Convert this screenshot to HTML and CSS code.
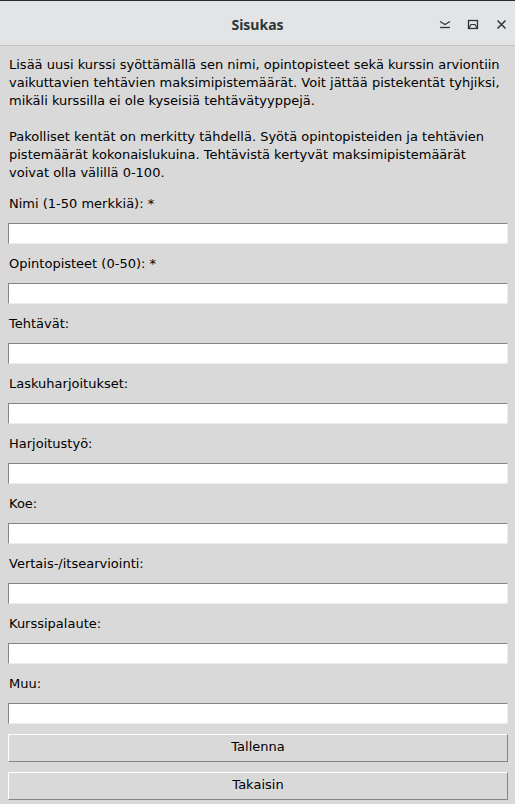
FILE: index.html
```html
<!DOCTYPE html>
<html lang="fi">
<head>
<meta charset="utf-8">
<title>Sisukas</title>
<link rel="stylesheet" href="styles.css">
</head>
<body>
<div class="window">
  <header class="titlebar">
    <div class="spacer"></div>
    <div class="title">Sisukas</div>
    <div class="controls">
      <span class="ctl">
        <svg width="12" height="10" viewBox="0 0 12 10"><path d="M1 1.5 L6 4.5 L11 1.5" fill="none" stroke="#2e3436" stroke-width="1.3"/><path d="M1 7.5 H11" stroke="#2e3436" stroke-width="1.3"/></svg>
      </span>
      <span class="ctl">
        <svg width="12" height="11" viewBox="0 0 12 11"><rect x="1.5" y="1.5" width="9" height="8" fill="none" stroke="#2e3436" stroke-width="1.3"/><path d="M2 9 L4 5.5 H8 L10 9" fill="none" stroke="#2e3436" stroke-width="1.2"/></svg>
      </span>
      <span class="ctl">
        <svg width="11" height="11" viewBox="0 0 11 11"><path d="M1.5 1.5 L9.5 9.5 M9.5 1.5 L1.5 9.5" stroke="#2e3436" stroke-width="1.5"/></svg>
      </span>
    </div>
  </header>
  <main class="content">
    <p class="intro">Lisää uusi kurssi syöttämällä sen nimi, opintopisteet sekä kurssin arviontiin vaikuttavien tehtävien maksimipistemäärät. Voit jättää pistekentät tyhjiksi, mikäli kurssilla ei ole kyseisiä tehtävätyyppejä.<br><br>Pakolliset kentät on merkitty tähdellä. Syötä opintopisteiden ja tehtävien pistemäärät kokonaislukuina. Tehtävistä kertyvät maksimipistemäärät voivat olla välillä 0-100.</p>
    <form class="fields">
      <label class="label first">Nimi (1-50 merkkiä): *</label>
      <input class="entry" type="text">
      <label class="label">Opintopisteet (0-50): *</label>
      <input class="entry" type="text">
      <label class="label">Tehtävät:</label>
      <input class="entry" type="text">
      <label class="label">Laskuharjoitukset:</label>
      <input class="entry" type="text">
      <label class="label">Harjoitustyö:</label>
      <input class="entry" type="text">
      <label class="label">Koe:</label>
      <input class="entry" type="text">
      <label class="label">Vertais-/itsearviointi:</label>
      <input class="entry" type="text">
      <label class="label">Kurssipalaute:</label>
      <input class="entry" type="text">
      <label class="label">Muu:</label>
      <input class="entry" type="text">
      <button class="btn" type="button">Tallenna</button>
      <button class="btn" type="button">Takaisin</button>
    </form>
  </main>
</div>
</body>
</html>
```

FILE: styles.css
```css
html, body {
  margin: 0;
  padding: 0;
  background: #d9d9d9;
}

.window {
  width: 515px;
  height: 804px;
  overflow: hidden;
  font-family: "DejaVu Sans", sans-serif;
  font-size: 13px;
  color: #000;
}

.titlebar {
  height: 46px;
  box-sizing: border-box;
  border-top: 1px solid #2a2a2a;
  border-bottom: 1px solid #c2c2c2;
  background: #e3e4e6;
  display: grid;
  grid-template-columns: 1fr auto 1fr;
  align-items: center;
}

.title {
  font-family: "Noto Sans", "DejaVu Sans", sans-serif;
  font-weight: 700;
  font-size: 14px;
  color: #2e3436;
  padding-top: 2px;
}

.controls {
  display: flex;
  justify-content: flex-end;
  align-items: center;
  padding-top: 3px;
}

.ctl {
  width: 28px;
  height: 24px;
  display: flex;
  align-items: center;
  justify-content: center;
}

.content {
  padding: 10px 7px 0 8px;
}

.intro {
  margin: 0;
  line-height: 18px;
  padding-left: 1px;
}

.fields {
  display: flex;
  flex-direction: column;
}

.label {
  line-height: 18px;
  margin-top: 11px;
  margin-bottom: 10px;
  padding-left: 1px;
}

.label.first {
  margin-top: 13px;
}

.entry {
  display: block;
  margin: 0;
  width: 500px;
  height: 21px;
  box-sizing: border-box;
  background: #fff;
  border-style: solid;
  border-width: 1px;
  border-color: #858585 #ececec #ececec #858585;
  padding: 0 2px;
  font: inherit;
  outline: none;
}

.btn {
  margin: 10px 0 0 0;
  width: 500px;
  height: 28px;
  box-sizing: border-box;
  background: #d9d9d9;
  border-style: solid;
  border-width: 1px;
  border-color: #ffffff #858585 #858585 #ffffff;
  font: inherit;
  color: #000;
  padding: 0 0 3px 0;
}
```
